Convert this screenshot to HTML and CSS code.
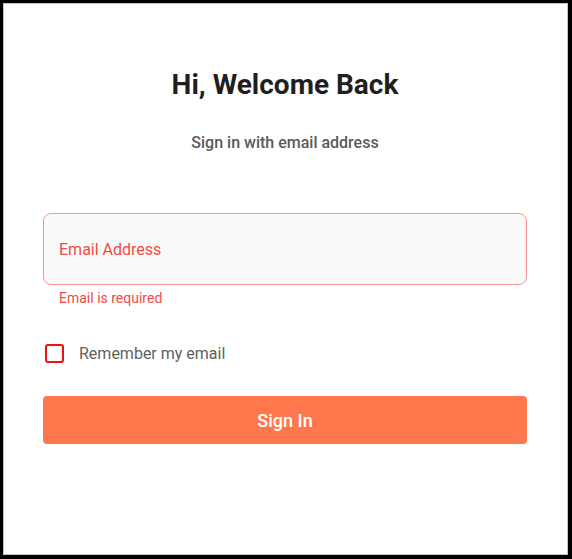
FILE: index.html
```html
<!DOCTYPE html>
<html>
<head>
<meta charset="utf-8">
<link rel="stylesheet" href="styles.css">
</head>
<body>
<div class="frame">
  <div class="card">
    <h1 class="title">Hi, Welcome Back</h1>
    <p class="subtitle">Sign in with email address</p>
    <div class="field">
      <div class="input">Email Address</div>
      <div class="error">Email is required</div>
    </div>
    <label class="remember">
      <span class="checkbox"></span>
      <span class="remember-text">Remember my email</span>
    </label>
    <button class="submit">Sign In</button>
  </div>
</div>
</body>
</html>
```

FILE: styles.css
```css
* { box-sizing: border-box; }
html, body { margin: 0; padding: 0; background: #fff; }
body { font-family: Roboto, "Liberation Sans", sans-serif; }
.frame {
  width: 572px;
  height: 559px;
  border-style: solid;
  border-color: #000;
  border-width: 3px 4px 4px 3px;
}
.card {
  height: 100%;
  border: 1px solid #c4c4c4;
  padding: 0 40px 0 39px;
  display: flex;
  flex-direction: column;
}
.title {
  margin: 65px 0 0;
  text-align: center;
  font-size: 28px;
  font-weight: 700;
  line-height: 32px;
  color: #1f1f1f;
}
.subtitle {
  margin: 32px 0 0;
  text-align: center;
  font-size: 16px;
  font-weight: 500;
  line-height: 20px;
  color: #5a5a5a;
}
.field { margin-top: 60px; }
.input {
  height: 72px;
  border: 1.5px solid #f7938d;
  border-radius: 8px;
  background: #fafafa;
  padding: 0 15px;
  display: flex;
  align-items: center;
  font-size: 16px;
  color: #f04b45;
}
.error {
  margin-top: 5px;
  padding-left: 16px;
  font-size: 14px;
  line-height: 17px;
  color: #f04b45;
}
.remember {
  margin-top: 37px;
  display: flex;
  align-items: center;
  gap: 15px;
  padding-left: 2px;
}
.checkbox {
  width: 19px;
  height: 19px;
  border: 2px solid #f01010;
  border-radius: 3px;
}
.remember-text {
  font-size: 16px;
  color: #5f5f5f;
}
.submit {
  margin-top: 33px;
  height: 48px;
  border: none;
  border-radius: 4px;
  background: #ff784d;
  color: #fff;
  font-family: Roboto, "Liberation Sans", sans-serif;
  font-size: 18px;
  font-weight: 500;
}
```
